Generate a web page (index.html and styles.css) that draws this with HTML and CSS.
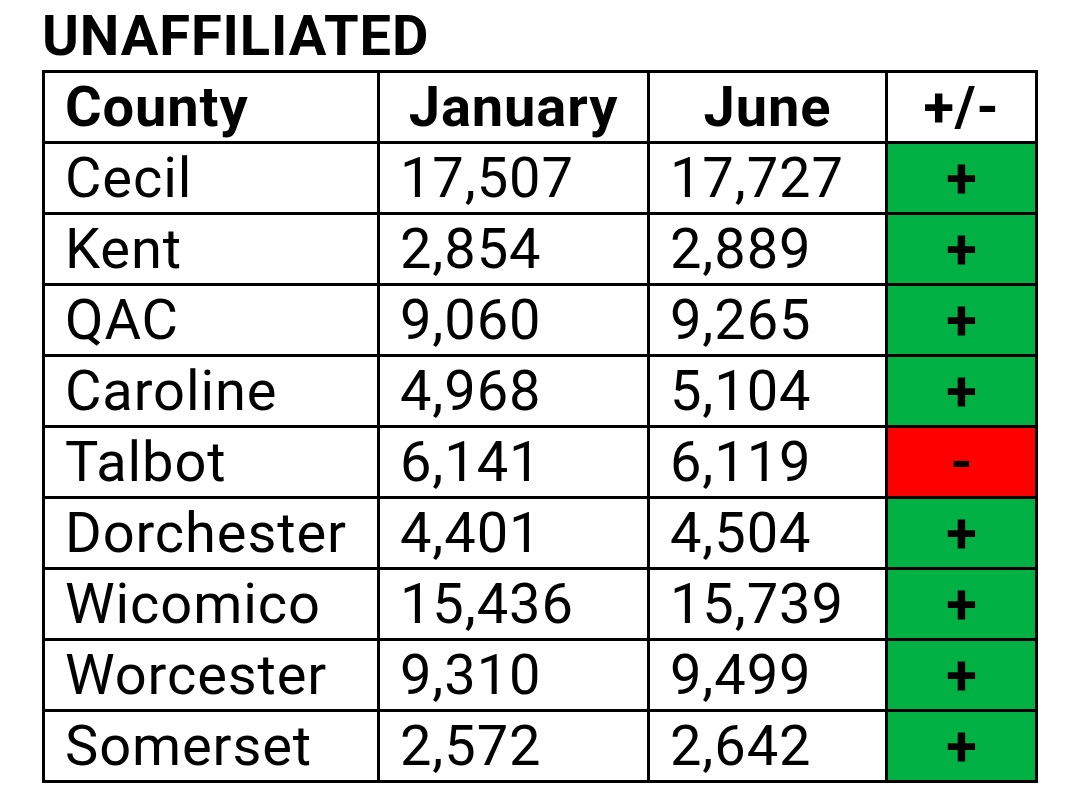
FILE: index.html
```html
<!DOCTYPE html>
<html>
<head>
<meta charset="utf-8">
<link rel="stylesheet" href="styles.css">
</head>
<body>
<div class="page">
  <h1 class="title">UNAFFILIATED</h1>
  <table class="grid">
    <colgroup>
      <col class="c1"><col class="c2"><col class="c3"><col class="c4">
    </colgroup>
    <thead>
      <tr><th class="left">County</th><th>January</th><th>June</th><th>+/-</th></tr>
    </thead>
    <tbody>
      <tr><td>Cecil</td><td>17,507</td><td>17,727</td><td class="up">+</td></tr>
      <tr><td>Kent</td><td>2,854</td><td>2,889</td><td class="up">+</td></tr>
      <tr><td>QAC</td><td>9,060</td><td>9,265</td><td class="up">+</td></tr>
      <tr><td>Caroline</td><td>4,968</td><td>5,104</td><td class="up">+</td></tr>
      <tr><td>Talbot</td><td>6,141</td><td>6,119</td><td class="down">-</td></tr>
      <tr><td>Dorchester</td><td>4,401</td><td>4,504</td><td class="up">+</td></tr>
      <tr><td>Wicomico</td><td>15,436</td><td>15,739</td><td class="up">+</td></tr>
      <tr><td>Worcester</td><td>9,310</td><td>9,499</td><td class="up">+</td></tr>
      <tr><td>Somerset</td><td>2,572</td><td>2,642</td><td class="up">+</td></tr>
    </tbody>
  </table>
</div>
</body>
</html>
```
FILE: styles.css
```css
html, body {
  margin: 0;
  padding: 0;
  background: #ffffff;
}
.page {
  padding: 4px 0 0 42px;
  font-family: Roboto, "Liberation Sans", sans-serif;
  color: #000;
}
.title {
  margin: 0 0 2px 0;
  font-size: 56px;
  font-weight: 700;
  line-height: 64px;
  letter-spacing: 0.9px;
}
.grid {
  border-collapse: collapse;
  table-layout: fixed;
  width: 995px;
  border: 3px solid #000;
}
.c1 { width: 335px; }
.c2 { width: 270px; }
.c3 { width: 238px; }
.c4 { width: 150px; }
.grid th, .grid td {
  border: 3px solid #000;
  height: 68px;
  padding: 0 0 0 20px;
  font-size: 56px;
  line-height: 60px;
  letter-spacing: 0.9px;
  vertical-align: middle;
  text-align: left;
  white-space: nowrap;
}
.grid th {
  font-weight: 700;
  text-align: center;
  padding: 0;
}
.grid th.left {
  text-align: left;
  padding-left: 20px;
}
.grid td.up, .grid td.down {
  text-align: center;
  padding: 0;
  font-weight: 700;
  letter-spacing: 0;
}
.up { background: #02b143; }
.down { background: #ff0000; }
```
